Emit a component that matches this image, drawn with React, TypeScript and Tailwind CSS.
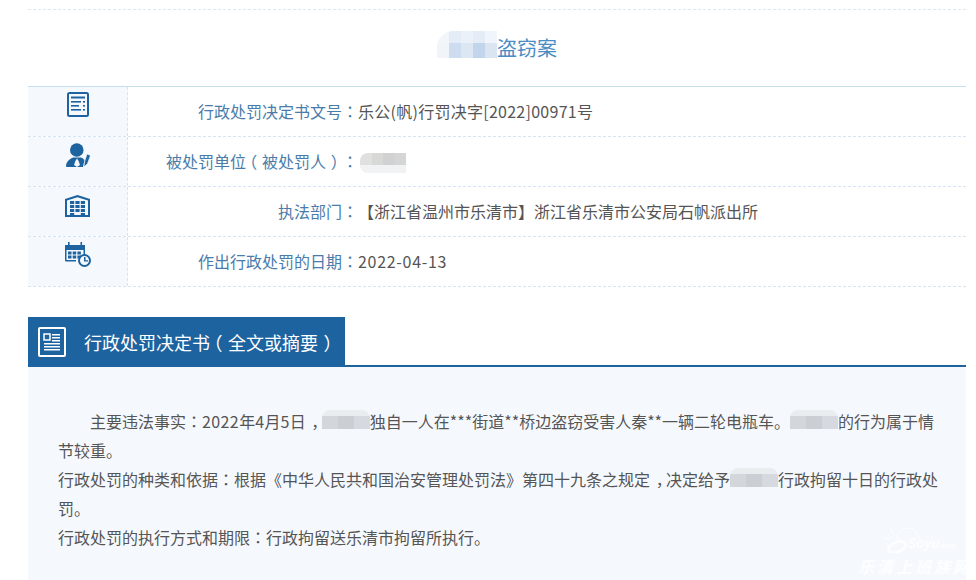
import type { ReactNode } from "react";

const FONT = "font-['Noto_Sans_CJK_SC','Liberation_Sans',sans-serif]";
const BLUE = "#1d639f";

function DocIcon() {
  return (
    <svg width="22" height="25" viewBox="0 0 22 25" fill="none">
      <rect x="1" y="1" width="20" height="23" rx="1.500" stroke={BLUE} strokeWidth="2" fill="#f5f9fe" />
      <rect x="4" y="4.500" width="14" height="2" fill={BLUE} />
      <rect x="4" y="9" width="10" height="1.600" fill={BLUE} />
      <rect x="16" y="9" width="2" height="1.600" fill={BLUE} />
      <rect x="4" y="13" width="8" height="1.600" fill={BLUE} />
      <rect x="16" y="13" width="2" height="1.600" fill={BLUE} />
      <rect x="4" y="17" width="10" height="1.600" fill={BLUE} />
      <rect x="16" y="17" width="2" height="1.600" fill={BLUE} />
    </svg>
  );
}

function PersonIcon() {
  return (
    <svg width="24" height="24" viewBox="0 0 24 24" fill={BLUE}>
      <circle cx="10.800" cy="7" r="6.800" />
      <path d="M0 23.300C0 19 3 16.500 7 14.500h8c1.500.7 2.500 1.300 3.500 2.500L17 24H1c-.7 0-1-.2-1-.7z" />
      <path d="M11 15.500l1.600 2.500 1.400 4-3 2-3-2 1.400-4z" fill="#f5f9fe" />
      <path d="M18 24l.5-5 2.500-8 3.500 1.500-3 8z" stroke="#f5f9fe" strokeWidth=".6" />
    </svg>
  );
}

function BuildingIcon() {
  const cols = [5, 10.4, 15.800];
  const rows = [6, 10, 14];
  return (
    <svg width="25" height="22" viewBox="0 0 25 22" fill={BLUE}>
      <path fillRule="evenodd" d="M0 22V4L12.500 0 25 4v18zM2 5.500V20h21V5.500L12.500 2.200z" />
      {cols.map(x => rows.map(y => <rect key={`${x}-${y}`} x={x} y={y} width="4.200" height="3" />))}
      <rect x="5" y="18" width="4.200" height="2" />
      <rect x="15.800" y="18" width="4.200" height="2" />
    </svg>
  );
}

function CalendarIcon() {
  return (
    <svg width="26" height="25" viewBox="0 0 26 25" fill={BLUE}>
      <rect x="3" y="0" width="1.600" height="5" />
      <rect x="15.500" y="0" width="1.600" height="5" />
      <path d="M0 3h20v10h-1.500V8H1.500v10H11v1.500H1.500C.5 19.500 0 19 0 18z" />
      {[0, 1, 2].map(c =>
        [0, 1].map(r => <rect key={`${c}-${r}`} x={3 + c * 4.700} y={9.500 + r * 4} width="3.500" height="3" />)
      )}
      <circle cx="19.500" cy="18.500" r="5.500" fill="#f5f9fe" stroke={BLUE} strokeWidth="2" />
      <path d="M19 15h1.500v3.200H23v1.400h-4z" />
    </svg>
  );
}

function SheetIcon() {
  return (
    <svg width="28" height="30" viewBox="0 0 28 30" fill="none">
      <rect x="1" y="1" width="26" height="28" rx="1" stroke="#ffffff" strokeWidth="2" />
      <rect x="6" y="7" width="6" height="6" stroke="#ffffff" strokeWidth="1.500" />
      <g fill="#ffffff">
        <rect x="14" y="7" width="8" height="1.500" />
        <rect x="14" y="10" width="8" height="1.500" />
        <rect x="14" y="13" width="8" height="1.500" />
        <rect x="6" y="16" width="16" height="1.500" />
        <rect x="6" y="19" width="16" height="1.500" />
        <rect x="6" y="22" width="16" height="1.500" />
      </g>
    </svg>
  );
}

// yahei-style punctuation sits mid-cell, noto pushes it to the side
const Colon = () => <span className="font-['Noto_Sans_CJK_JP',sans-serif]">：</span>;
const Comma = () => <span className="-mr-[0.35em] pl-[0.35em]">，</span>;
const LParen = () => <span className="-ml-[0.3em] pr-[0.3em]">（</span>;
const RParen = () => <span className="-mr-[0.3em] pl-[0.3em]">）</span>;

// mosaic patch over a person's name, light band on top
function BodyMosaic() {
  return (
    <span className="mt-[3px] inline-flex h-[19px] w-12 flex-col overflow-hidden rounded-t-lg align-top">
      <span className="h-[6px] shrink-0 bg-[#eaedf0]" />
      <span className="flex flex-1">
        <span className="flex-1 bg-[#d3d6da]" />
        <span className="flex-1 bg-[#cbced2]" />
        <span className="flex-1 bg-[#d6dae0]" />
      </span>
    </span>
  );
}

// same patch in the table, dark band on top
function TableMosaic() {
  return (
    <span className="ml-[2px] mt-[5px] flex h-5 w-[46px] flex-col overflow-hidden rounded-l-lg">
      <span className="flex h-3 shrink-0">
        <span className="flex-1 bg-[#e0e0df]" />
        <span className="flex-1 bg-[#d8d8d7]" />
        <span className="flex-1 bg-[#d0d1d0]" />
        <span className="flex-1 bg-[#d4d5d5]" />
      </span>
      <span className="flex-1 bg-[#f1f2f4]" />
    </span>
  );
}

function TitleMosaic() {
  return (
    <span className="mb-[7px] flex h-[27px] w-[60px] flex-col overflow-hidden rounded-tl-2xl">
      <span className="flex h-[12px] shrink-0">
        <span className="flex-1 bg-[#f2f6fb]" />
        <span className="flex-1 bg-[#e4edf7]" />
        <span className="flex-1 bg-[#ebf1f8]" />
        <span className="flex-1 bg-[#e3ecf7]" />
        <span className="flex-1 bg-[#f0f5fb]" />
      </span>
      <span className="flex flex-1">
        <span className="flex-1 bg-[#f1f5fa]" />
        <span className="flex-1 bg-[#cddcee]" />
        <span className="flex-1 bg-[#dce7f3]" />
        <span className="flex-1 bg-[#c3d5ea]" />
        <span className="flex-1 bg-[#dbe5f2]" />
      </span>
    </span>
  );
}

type Row = { icon: ReactNode; pt: string; label: ReactNode; value: ReactNode };

const rows: Row[] = [
  {
    icon: <DocIcon />,
    pt: "pt-[5px]",
    label: "行政处罚决定书文号",
    value: <span className="tracking-[0.27px]">乐公(帆)行罚决字[2022]00971<span className="tracking-normal">号</span></span>,
  },
  {
    icon: <PersonIcon />,
    pt: "pt-[6px]",
    label: <>被处罚单位<LParen />被处罚人<RParen /></>,
    value: <TableMosaic />,
  },
  {
    icon: <BuildingIcon />,
    pt: "pt-2",
    label: "执法部门",
    value: "【浙江省温州市乐清市】浙江省乐清市公安局石帆派出所",
  },
  {
    icon: <CalendarIcon />,
    pt: "pt-[5px]",
    label: "作出行政处罚的日期",
    value: <span className="tracking-[0.7px]">2022-04-13</span>,
  },
];

export default function App() {
  return (
    <div className={`relative flex h-[580px] w-[976px] flex-col overflow-hidden bg-white pl-7 pr-[10px] pt-[9px] [text-spacing-trim:space-all] ${FONT}`}>
      <div className="flex h-[77px] shrink-0 items-center justify-center border-t border-dashed border-[#d9e8f5] text-xl text-[#4a8cc4]">
        <TitleMosaic />
        盗窃案
      </div>

      <div className="shrink-0 border-t border-[#c5dff0]">
        {rows.map((row, i) => (
          <div key={i} className="flex h-[50px] border-b border-dashed border-[#d3e4f5] text-base">
            <div className={`flex w-[100px] justify-center border-r border-dashed border-[#d3e4f5] bg-[#f5f9fe] ${row.pt}`}>
              {row.icon}
            </div>
            <div className="flex w-[230px] items-center justify-end whitespace-nowrap pb-[2px] text-[#4a7cab]">
              <span>{row.label}<Colon /></span>
            </div>
            <div className="flex flex-1 items-center whitespace-nowrap pb-[2px] text-[#555555]">{row.value}</div>
          </div>
        ))}
      </div>

      <div className="mt-[30px] h-[50px] shrink-0 border-b-2 border-[#1d639f]">
        <div className="flex h-full w-[317px] items-center bg-[#1d639f] pl-[10px] pt-[2px] text-white">
          <SheetIcon />
          <span className="ml-[18px] whitespace-nowrap text-lg">行政处罚决定书<LParen />全文或摘要<RParen /></span>
        </div>
      </div>

      <div className="min-h-0 flex-1 bg-[#f5f9fe] pl-[30px] pr-6 pt-[40px] text-base leading-[29px] text-[#555555]">
        <p className="indent-8">
          主要违法事实<Colon /><span className="tracking-[0.4px]">2022</span>年<span className="tracking-[0.4px]">4</span>月<span className="tracking-[0.4px]">5</span>日<Comma /><BodyMosaic />独自一人在***街道**桥边盗窃受害人秦**一辆二轮电瓶车。<BodyMosaic />的行为属于情节较重。
        </p>
        <p>
          行政处罚的种类和依据<Colon />根据《中华人民共和国治安管理处罚法》第四十九条之规定<Comma />决定给予<BodyMosaic />行政拘留十日的行政处罚。
        </p>
        <p>行政处罚的执行方式和期限<Colon />行政拘留送乐清市拘留所执行。</p>
      </div>

      {/* site watermark */}
      <div className="absolute left-[883px] top-[527px] flex items-end text-white/80">
        <svg width="46" height="26" viewBox="0 0 46 26" fill="none" stroke="currentColor">
          <ellipse cx="14" cy="20" rx="9" ry="5" strokeWidth="2.500" transform="rotate(-20 14 20)" />
          <path d="M15 14C13 6 18 1 24 1c6 0 10 4 13 12" strokeWidth="1" />
          <path d="M3 6l5 4M8 2l3 6M1 11l6 1" strokeWidth="1" />
        </svg>
        <span className="-ml-[22px] text-[13px] font-bold italic leading-4">Soyu<span className="text-[7px]">.com</span></span>
      </div>
      <div className="absolute left-[858px] top-[556px] whitespace-nowrap text-base font-bold italic leading-5 tracking-[3px] text-white/80">
        乐清上班族网
      </div>
    </div>
  );
}
